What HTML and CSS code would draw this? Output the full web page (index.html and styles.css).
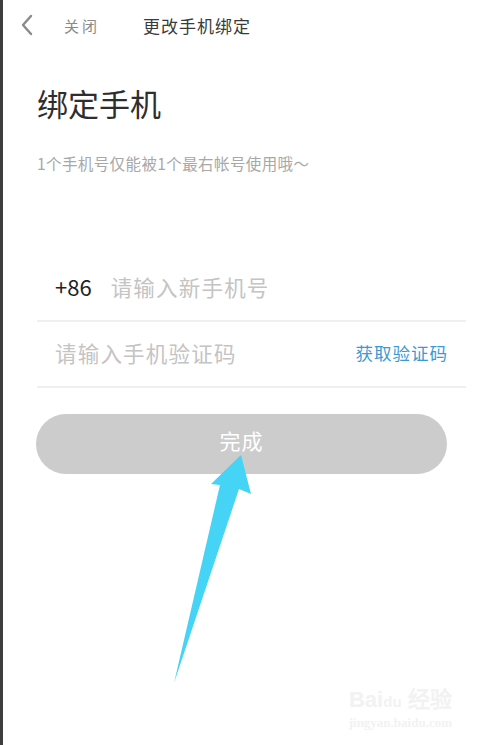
FILE: index.html
```html
<!DOCTYPE html>
<html lang="zh-CN">
<head>
    <meta charset="UTF-8">
    <meta name="viewport" content="width=device-width, initial-scale=1.0">
    <title>绑定手机</title>
    <link rel="stylesheet" href="styles.css">
</head>
<body>
    <div class="page">
        <div class="header">
            <span class="back">
                <svg width="14" height="22" viewBox="0 0 14 22">
                    <polyline points="11,2 3,11 11,20" fill="none" stroke="#8a8a8a" stroke-width="2.4" stroke-linecap="round" stroke-linejoin="round"/>
                </svg>
            </span>
            <span class="close">关闭</span>
            <span class="header-title">更改手机绑定</span>
        </div>

        <div class="main">
            <h1>绑定手机</h1>
            <p class="hint">1个手机号仅能被1个最右帐号使用哦～</p>

            <div class="form">
                <div class="row">
                    <span class="code">+86</span>
                    <span class="placeholder">请输入新手机号</span>
                </div>
                <div class="row">
                    <span class="placeholder">请输入手机验证码</span>
                    <a class="get-code">获取验证码</a>
                </div>
            </div>

            <button class="submit">完成</button>
        </div>

        <svg class="arrow" width="480" height="745" viewBox="0 0 480 745">
            <polygon points="241,455 251,494 239,489 174,683 220,485 211,484" fill="#45d3f6"/>
        </svg>

        <div class="watermark">
            <span class="wm-logo">Bai<b>du</b> 经验</span>
            <span class="wm-url">jingyan.baidu.com</span>
        </div>
    </div>
</body>
</html>
```

FILE: styles.css
```css
body {
    margin: 0;
    padding: 0;
    background-color: #ffffff;
    font-family: "Noto Sans CJK SC", "Noto Sans", sans-serif;
    color: #333333;
}

.page {
    position: relative;
    height: 745px;
    border-left: 3px solid #3d3d3d;
    box-sizing: border-box;
    overflow: hidden;
}

.header {
    display: flex;
    align-items: center;
    height: 50px;
}

.back {
    display: flex;
    margin-left: 17px;
}

.close {
    margin-left: 30px;
    font-size: 15px;
    color: #8a8a8a;
    letter-spacing: 3px;
}

.header-title {
    margin-left: 43px;
    font-size: 17px;
    color: #3a3a3a;
    letter-spacing: 1px;
}

.main {
    padding: 0 14px 0 34px;
}

h1 {
    margin: 33px 0 0;
    font-size: 31px;
    line-height: 40px;
    font-weight: 400;
    color: #2e2e2e;
}

.hint {
    margin: 30px 0 0;
    font-size: 15.5px;
    line-height: 20px;
    color: #a8a8a8;
    letter-spacing: 0.4px;
}

.form {
    margin-top: 83px;
}

.row {
    display: flex;
    align-items: center;
    box-sizing: border-box;
    height: 66px;
    padding: 0 18px 4px;
    border-bottom: 2px solid #efefef;
}

.code {
    font-size: 22px;
    color: #222222;
    margin-right: 19px;
}

.placeholder {
    font-size: 21.5px;
    color: #c4c4c4;
    letter-spacing: 1.2px;
}

.get-code {
    margin-left: auto;
    font-size: 17.5px;
    color: #3a9ad6;
    letter-spacing: 1px;
}

.submit {
    display: block;
    width: 411px;
    height: 60px;
    margin: 26px 0 0 -1px;
    padding: 0 0 8px;
    border: none;
    border-radius: 30px;
    background-color: #cccccc;
    color: #ffffff;
    font-family: inherit;
    font-size: 21px;
    letter-spacing: 1px;
}

.arrow {
    position: absolute;
    left: -3px;
    top: 0;
    pointer-events: none;
}

.watermark {
    position: absolute;
    right: 28px;
    bottom: 14px;
    display: flex;
    flex-direction: column;
    align-items: center;
    color: #f2f2f2;
    font-family: "Liberation Sans", sans-serif;
}

.wm-logo {
    font-size: 22px;
    font-weight: bold;
    line-height: 26px;
}

.wm-logo b {
    font-size: 15px;
}

.wm-url {
    font-family: "Liberation Serif", serif;
    font-size: 13px;
    font-weight: bold;
}
```
